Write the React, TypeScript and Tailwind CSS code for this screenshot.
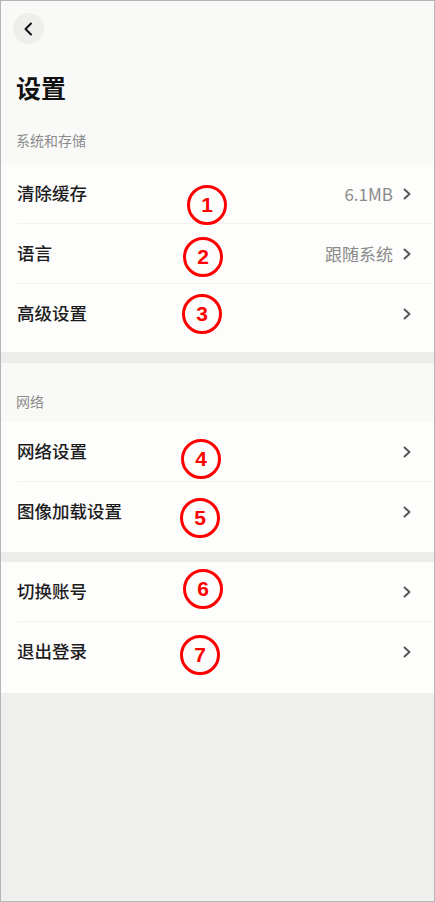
import React from "react"

const font = { fontFamily: '"Noto Sans CJK SC", "Noto Sans", sans-serif' }

type Row = { title: string; value?: string }

function Chevron() {
  return (
    <svg width="10" height="12" viewBox="0 0 10 12" fill="none" className="shrink-0">
      <path d="M2.5 1.5L7.5 6L2.5 10.5" stroke="#555" strokeWidth="1.9" strokeLinecap="round" strokeLinejoin="round" />
    </svg>
  )
}

function Group({ rows, pad }: { rows: Row[]; pad: string }) {
  return (
    <div className={`bg-[#fdfdfc] ${pad}`}>
      {rows.map((row, i) => (
        <div key={row.title} className="pl-4">
          {i > 0 && <div className="h-px bg-[#f1f1f0]" />}
          <div className="h-[59px] flex items-center pr-[22px]">
            <span className="flex-1 text-[17.5px] font-medium text-[#1c1c1c]">{row.title}</span>
            {row.value && <span className="text-[17px] text-[#8a8a8a] mr-[9px]">{row.value}</span>}
            <Chevron />
          </div>
        </div>
      ))}
    </div>
  )
}

const marks = [
  { n: "1", cls: "left-[186px] top-[184px]" },
  { n: "2", cls: "left-[182px] top-[236px]" },
  { n: "3", cls: "left-[181px] top-[293px]" },
  { n: "4", cls: "left-[180px] top-[438px]" },
  { n: "5", cls: "left-[179px] top-[497px]" },
  { n: "6", cls: "left-[182px] top-[568px]" },
  { n: "7", cls: "left-[179px] top-[634px]" },
]

export default function App() {
  return (
    <div style={font} className="relative w-[435px] h-[902px] border border-[#b5b5b5] bg-[#efefee] flex flex-col overflow-hidden">
      {/* header */}
      <div className="bg-[#f9f9f8] px-[12px] pt-[12px]">
        <div className="w-[31px] h-[31px] rounded-full bg-[#eeeeed] flex items-center justify-center">
          <svg width="12" height="14" viewBox="0 0 12 14" fill="none">
            <path d="M8 1.5L2.5 7L8 12.5" stroke="#111" strokeWidth="2" strokeLinecap="round" strokeLinejoin="round" />
          </svg>
        </div>
        <div className="pl-[3px] mt-[26px] text-[25px] font-bold leading-[34px] text-[#111]">设置</div>
        <div className="pl-[3px] mt-[26px] pb-[14px] text-[14px] leading-[20px] text-[#8c8c8c]">系统和存储</div>
      </div>

      <Group pad="pb-[9px]" rows={[{ title: "清除缓存", value: "6.1MB" }, { title: "语言", value: "跟随系统" }, { title: "高级设置" }]} />

      <div className="h-[11px] bg-[#ececeb]" />

      <div className="bg-[#f9f9f8] pl-[15px] pt-[28px] pb-[11px] text-[14px] leading-[20px] text-[#8c8c8c]">网络</div>

      <Group pad="pb-[11px]" rows={[{ title: "网络设置" }, { title: "图像加载设置" }]} />

      <div className="h-[10px] bg-[#ececeb]" />

      <Group pad="pb-[12px]" rows={[{ title: "切换账号" }, { title: "退出登录" }]} />

      <div className="flex-1 bg-[#efefee]" />

      {marks.map((m) => (
        <div
          key={m.n}
          className={`absolute ${m.cls} w-[40px] h-[40px] rounded-full border-[3.5px] border-[#ff0000] flex items-center justify-center text-[21px] font-bold text-[#ff0000]`}
          style={{ fontFamily: '"Liberation Sans", Arial, sans-serif' }}
        >
          {m.n}
        </div>
      ))}
    </div>
  )
}
